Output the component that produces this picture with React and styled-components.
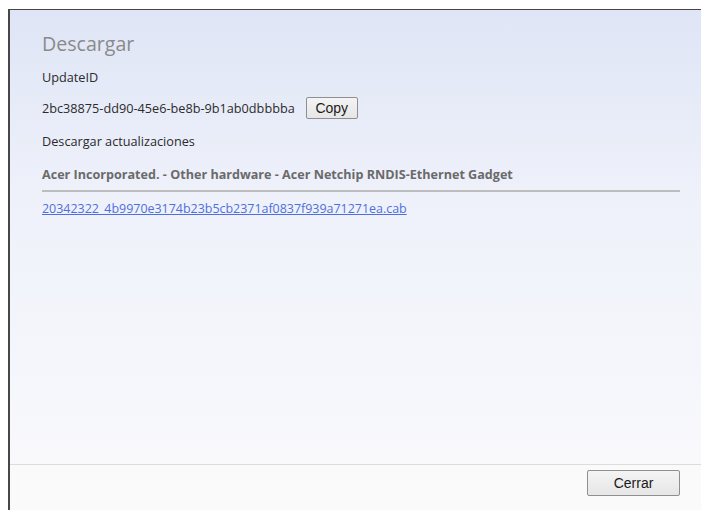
import React from "react";
import styled, { createGlobalStyle } from "styled-components";

const Global = createGlobalStyle`
  html, body { margin: 0; padding: 0; background: #ffffff; overflow: hidden; }
  body { font-family: "Open Sans", "Noto Sans", sans-serif; }
`;

const Page = styled.div`
  height: 510px;
  padding: 9px 0 0 8px;
  box-sizing: border-box;
  display: flex;
`;

const Dialog = styled.div`
  flex: 1;
  display: flex;
  flex-direction: column;
  border-left: 2px solid #474747;
  border-top: 1px solid #474747;
`;

const Body = styled.div`
  flex: 1;
  padding: 21px 21px 0 32px;
  background: linear-gradient(180deg, #dfe5f6 0%, #eef1fa 40%, #f9f9fc 100%);
  display: flex;
  flex-direction: column;
`;

const Title = styled.h1`
  margin: 0 0 12px;
  font-weight: 400;
  font-size: 19.6px;
  line-height: 26px;
  color: #8a8a8a;
`;

const Text = styled.div`
  font-size: 12.7px;
  line-height: 17px;
  color: #2b2b2b;
  white-space: nowrap;
  margin-bottom: ${(p) => p.$gap || 0}px;
`;

const IdRow = styled.div`
  display: flex;
  align-items: center;
  gap: 11px;
  margin-bottom: 14px;
`;

const Button = styled.button`
  font-family: "Liberation Sans", Arial, sans-serif;
  font-size: 14px;
  color: #1a1a1a;
  background: linear-gradient(180deg, #f4f4f4, #e6e6e6);
  border: 1px solid #8f8f8f;
  border-radius: 2px;
  padding: 0;
  height: ${(p) => p.$h}px;
  width: ${(p) => p.$w}px;
`;

const Vendor = styled.div`
  font-size: 12.6px;
  font-weight: 700;
  line-height: 17px;
  color: #6a6a6a;
  white-space: nowrap;
  padding-bottom: 7px;
  border-bottom: 2px solid #bdbdbd;
  margin-bottom: 8px;
`;

const FileLink = styled.a`
  font-size: 12.45px;
  line-height: 17px;
  color: #4d6fe0;
  text-decoration: underline;
  align-self: flex-start;
`;

const Footer = styled.div`
  height: 46px;
  box-sizing: border-box;
  border-top: 1px solid #dcdcdc;
  background: #fafafa;
  display: flex;
  justify-content: flex-end;
  align-items: flex-start;
  padding: 5px 21px 0 0;
`;

export default function App() {
  return (
    <>
      <Global />
      <Page>
        <Dialog>
          <Body>
            <Title>Descargar</Title>
            <Text $gap={11}>UpdateID</Text>
            <IdRow>
              <Text>2bc38875-dd90-45e6-be8b-9b1ab0dbbbba</Text>
              <Button $w={52} $h={22}>Copy</Button>
            </IdRow>
            <Text $gap={16}>Descargar actualizaciones</Text>
            <Vendor>Acer Incorporated. - Other hardware - Acer Netchip RNDIS-Ethernet Gadget</Vendor>
            <FileLink href="#">20342322_4b9970e3174b23b5cb2371af0837f939a71271ea.cab</FileLink>
          </Body>
          <Footer>
            <Button $w={93} $h={26}>Cerrar</Button>
          </Footer>
        </Dialog>
      </Page>
    </>
  );
}
